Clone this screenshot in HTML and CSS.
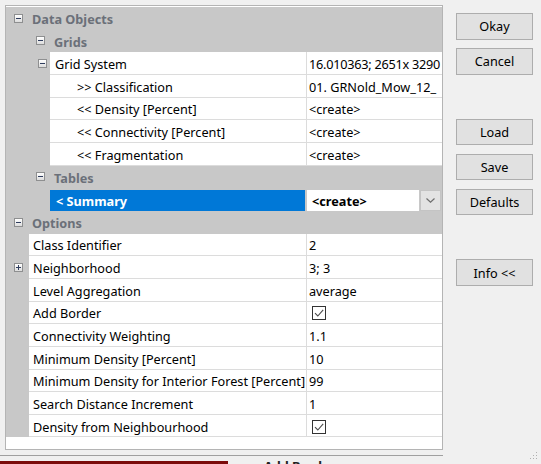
FILE: index.html
```html
<!DOCTYPE html>
<html>
<head>
<meta charset="utf-8">
<link rel="stylesheet" href="styles.css">
</head>
<body>
<div class="dialog">
  <div class="panel">
    <div class="row cat cat0"><span class="box minus"></span><span class="cat-label">Data Objects</span></div>
    <div class="row cat cat1"><span class="box minus"></span><span class="cat-label">Grids</span></div>
    <div class="row prop">
      <div class="gutter g44"><span class="box minus gs"></span></div>
      <div class="name">Grid System</div>
      <div class="value tight">16.010363; 2651x 3290</div>
    </div>
    <div class="row prop">
      <div class="gutter g44"></div>
      <div class="name sub">&gt;&gt; Classification</div>
      <div class="value">01. GRNold_Mow_12_</div>
    </div>
    <div class="row prop">
      <div class="gutter g44"></div>
      <div class="name sub">&lt;&lt; Density [Percent]</div>
      <div class="value">&lt;create&gt;</div>
    </div>
    <div class="row prop">
      <div class="gutter g44"></div>
      <div class="name sub">&lt;&lt; Connectivity [Percent]</div>
      <div class="value">&lt;create&gt;</div>
    </div>
    <div class="row prop">
      <div class="gutter g44"></div>
      <div class="name sub">&lt;&lt; Fragmentation</div>
      <div class="value">&lt;create&gt;</div>
    </div>
    <div class="row cat cat1"><span class="box minus"></span><span class="cat-label">Tables</span></div>
    <div class="row prop selected">
      <div class="gutter g44"></div>
      <div class="name sel">&lt; Summary</div>
      <div class="value editor">
        <span class="edit-text">&lt;create&gt;</span>
        <span class="drop"><svg width="9" height="5" viewBox="0 0 9 5"><path d="M0.5 0.5 L4.5 4.2 L8.5 0.5" fill="none" stroke="#6e6e6e" stroke-width="1.2"/></svg></span>
      </div>
    </div>
    <div class="row cat cat0"><span class="box minus"></span><span class="cat-label">Options</span></div>
    <div class="row prop">
      <div class="gutter g23"></div>
      <div class="name opt">Class Identifier</div>
      <div class="value">2</div>
    </div>
    <div class="row prop">
      <div class="gutter g23"><span class="box plus"></span></div>
      <div class="name opt">Neighborhood</div>
      <div class="value">3; 3</div>
    </div>
    <div class="row prop">
      <div class="gutter g23"></div>
      <div class="name opt">Level Aggregation</div>
      <div class="value">average</div>
    </div>
    <div class="row prop">
      <div class="gutter g23"></div>
      <div class="name opt">Add Border</div>
      <div class="value"><span class="check"><svg width="12" height="12" viewBox="0 0 12 12"><path d="M2 6.2 L4.8 9 L10.2 2.8" fill="none" stroke="#4a4a4a" stroke-width="1.1"/></svg></span></div>
    </div>
    <div class="row prop">
      <div class="gutter g23"></div>
      <div class="name opt">Connectivity Weighting</div>
      <div class="value">1.1</div>
    </div>
    <div class="row prop">
      <div class="gutter g23"></div>
      <div class="name opt">Minimum Density [Percent]</div>
      <div class="value">10</div>
    </div>
    <div class="row prop">
      <div class="gutter g23"></div>
      <div class="name opt">Minimum Density for Interior Forest [Percent]</div>
      <div class="value">99</div>
    </div>
    <div class="row prop">
      <div class="gutter g23"></div>
      <div class="name opt">Search Distance Increment</div>
      <div class="value">1</div>
    </div>
    <div class="row prop">
      <div class="gutter g23"></div>
      <div class="name opt">Density from Neighbourhood</div>
      <div class="value"><span class="check"><svg width="12" height="12" viewBox="0 0 12 12"><path d="M2 6.2 L4.8 9 L10.2 2.8" fill="none" stroke="#4a4a4a" stroke-width="1.1"/></svg></span></div>
    </div>
  </div>
  <div class="buttons">
    <div class="btn">Okay</div>
    <div class="btn">Cancel</div>
    <div class="slot"></div>
    <div class="btn">Load</div>
    <div class="btn">Save</div>
    <div class="btn">Defaults</div>
    <div class="slot"></div>
    <div class="btn">Info &lt;&lt;</div>
  </div>
</div>
<div class="sep"></div>
<div class="bleed"><span class="red"></span><span class="bleed-text">Add Border</span></div>
<div class="grip"><svg width="10" height="12" viewBox="0 0 10 12"><g fill="#b0b0b0"><rect x="8" y="2" width="1" height="1"/><rect x="8" y="5" width="1" height="1"/><rect x="5" y="5" width="1" height="1"/><rect x="8" y="8" width="1" height="1"/><rect x="5" y="8" width="1" height="1"/><rect x="2" y="8" width="1" height="1"/></g></svg></div>
</body>
</html>
```

FILE: styles.css
```css
* { box-sizing: border-box; }
html, body { margin: 0; padding: 0; }
body {
  width: 541px;
  height: 464px;
  overflow: hidden;
  position: relative;
  background: #f0f0f0;
  font-family: "Noto Sans", "Open Sans", sans-serif;
  font-size: 12.7px;
  color: #000;
}
.dialog {
  display: flex;
  height: 450px;
  padding: 5px 0 0 5px;
}
.panel {
  width: 438px;
  height: 445px;
  border: 1px solid #b4b4b4;
  background: #fff;
  padding-top: 1px;
  flex: none;
}
.row {
  display: flex;
  height: 22.67px;
}
.cat {
  background: #c8c8c8;
  align-items: center;
  color: #6b7079;
  font-weight: bold;
}
.cat0 { padding-left: 8px; }
.cat1 { padding-left: 30px; }
.cat-label { margin-left: 9px; padding-top: 2px; }
.box {
  width: 9px;
  height: 9px;
  border: 1px solid #8e8f90;
  background: linear-gradient(#ffffff, #dcdcdc);
  position: relative;
  flex: none;
  display: block;
}
.box::before {
  content: "";
  position: absolute;
  left: 1px;
  top: 3px;
  width: 5px;
  height: 1px;
  background: #2f3d5e;
}
.box.plus::after {
  content: "";
  position: absolute;
  left: 3px;
  top: 1px;
  width: 1px;
  height: 5px;
  background: #2f3d5e;
}
.gutter {
  background: #c8c8c8;
  display: flex;
  align-items: center;
  flex: none;
}
.g44 { width: 44px; }
.g23 { width: 23px; padding-left: 8px; }
.gs { margin-left: 32px; }
.name {
  flex: 1;
  background: #fff;
  border-bottom: 1px solid #dcdcdc;
  display: flex;
  align-items: center;
  padding-left: 5px;
  padding-top: 2px;
  white-space: nowrap;
  overflow: hidden;
  min-width: 0;
}
.name.sub { padding-left: 27px; }
.name.opt { padding-left: 4px; }
.value {
  width: 136px;
  flex: none;
  background: #fff;
  border-left: 1px solid #dcdcdc;
  border-bottom: 1px solid #dcdcdc;
  display: flex;
  align-items: center;
  padding-left: 2px;
  padding-top: 2px;
  white-space: nowrap;
  overflow: hidden;
}
.value.tight { letter-spacing: -0.25px; }
.selected { background: #c8c8c8; }
.name.sel {
  background: #0078d7;
  color: #fff;
  font-weight: bold;
  margin-top: 2px;
  border-bottom: none;
  padding-left: 6px;
  padding-top: 0;
  margin-right: 1px;
}
.value.editor {
  margin-top: 2px;
  border-left: 1px solid #c8c8c8;
  border-bottom: none;
  padding-left: 4px;
  padding-top: 0;
  padding-right: 0;
  background: #c8c8c8;
}
.edit-text {
  flex: 1;
  align-self: stretch;
  display: flex;
  align-items: center;
  background: #fff;
  font-weight: bold;
  margin-left: -4px;
  padding-left: 5px;
}
.drop {
  width: 21px;
  align-self: stretch;
  margin-left: 1px;
  margin-right: 1px;
  background: #e3e3e3;
  border: 1px solid #c4c4c4;
  display: flex;
  align-items: center;
  justify-content: center;
}
.check {
  width: 14px;
  height: 14px;
  border: 1px solid #333;
  background: #fff;
  display: flex;
  align-items: center;
  justify-content: center;
  margin-left: 3px;
}
.buttons {
  display: flex;
  flex-direction: column;
  gap: 8.7px;
  padding-top: 8px;
  margin-left: 13px;
}
.btn, .slot {
  width: 77px;
  height: 26.5px;
}
.btn {
  background: #e1e1e1;
  border: 1px solid #adadad;
  display: flex;
  align-items: center;
  justify-content: center;
}
.sep {
  margin-top: 5px;
  width: 443px;
  height: 1px;
  background: #a0a0a0;
}
.bleed {
  margin-top: 5px;
  height: 3px;
  display: flex;
  overflow: hidden;
}
.red {
  width: 228px;
  height: 3px;
  background: #7b0b0b;
  flex: none;
}
.bleed-text {
  margin-left: 36px;
  font-weight: bold;
  line-height: 12px;
  margin-top: -1px;
  color: #222;
}
.grip {
  position: absolute;
  right: 3px;
  bottom: 4px;
  width: 10px;
  height: 12px;
}
```
